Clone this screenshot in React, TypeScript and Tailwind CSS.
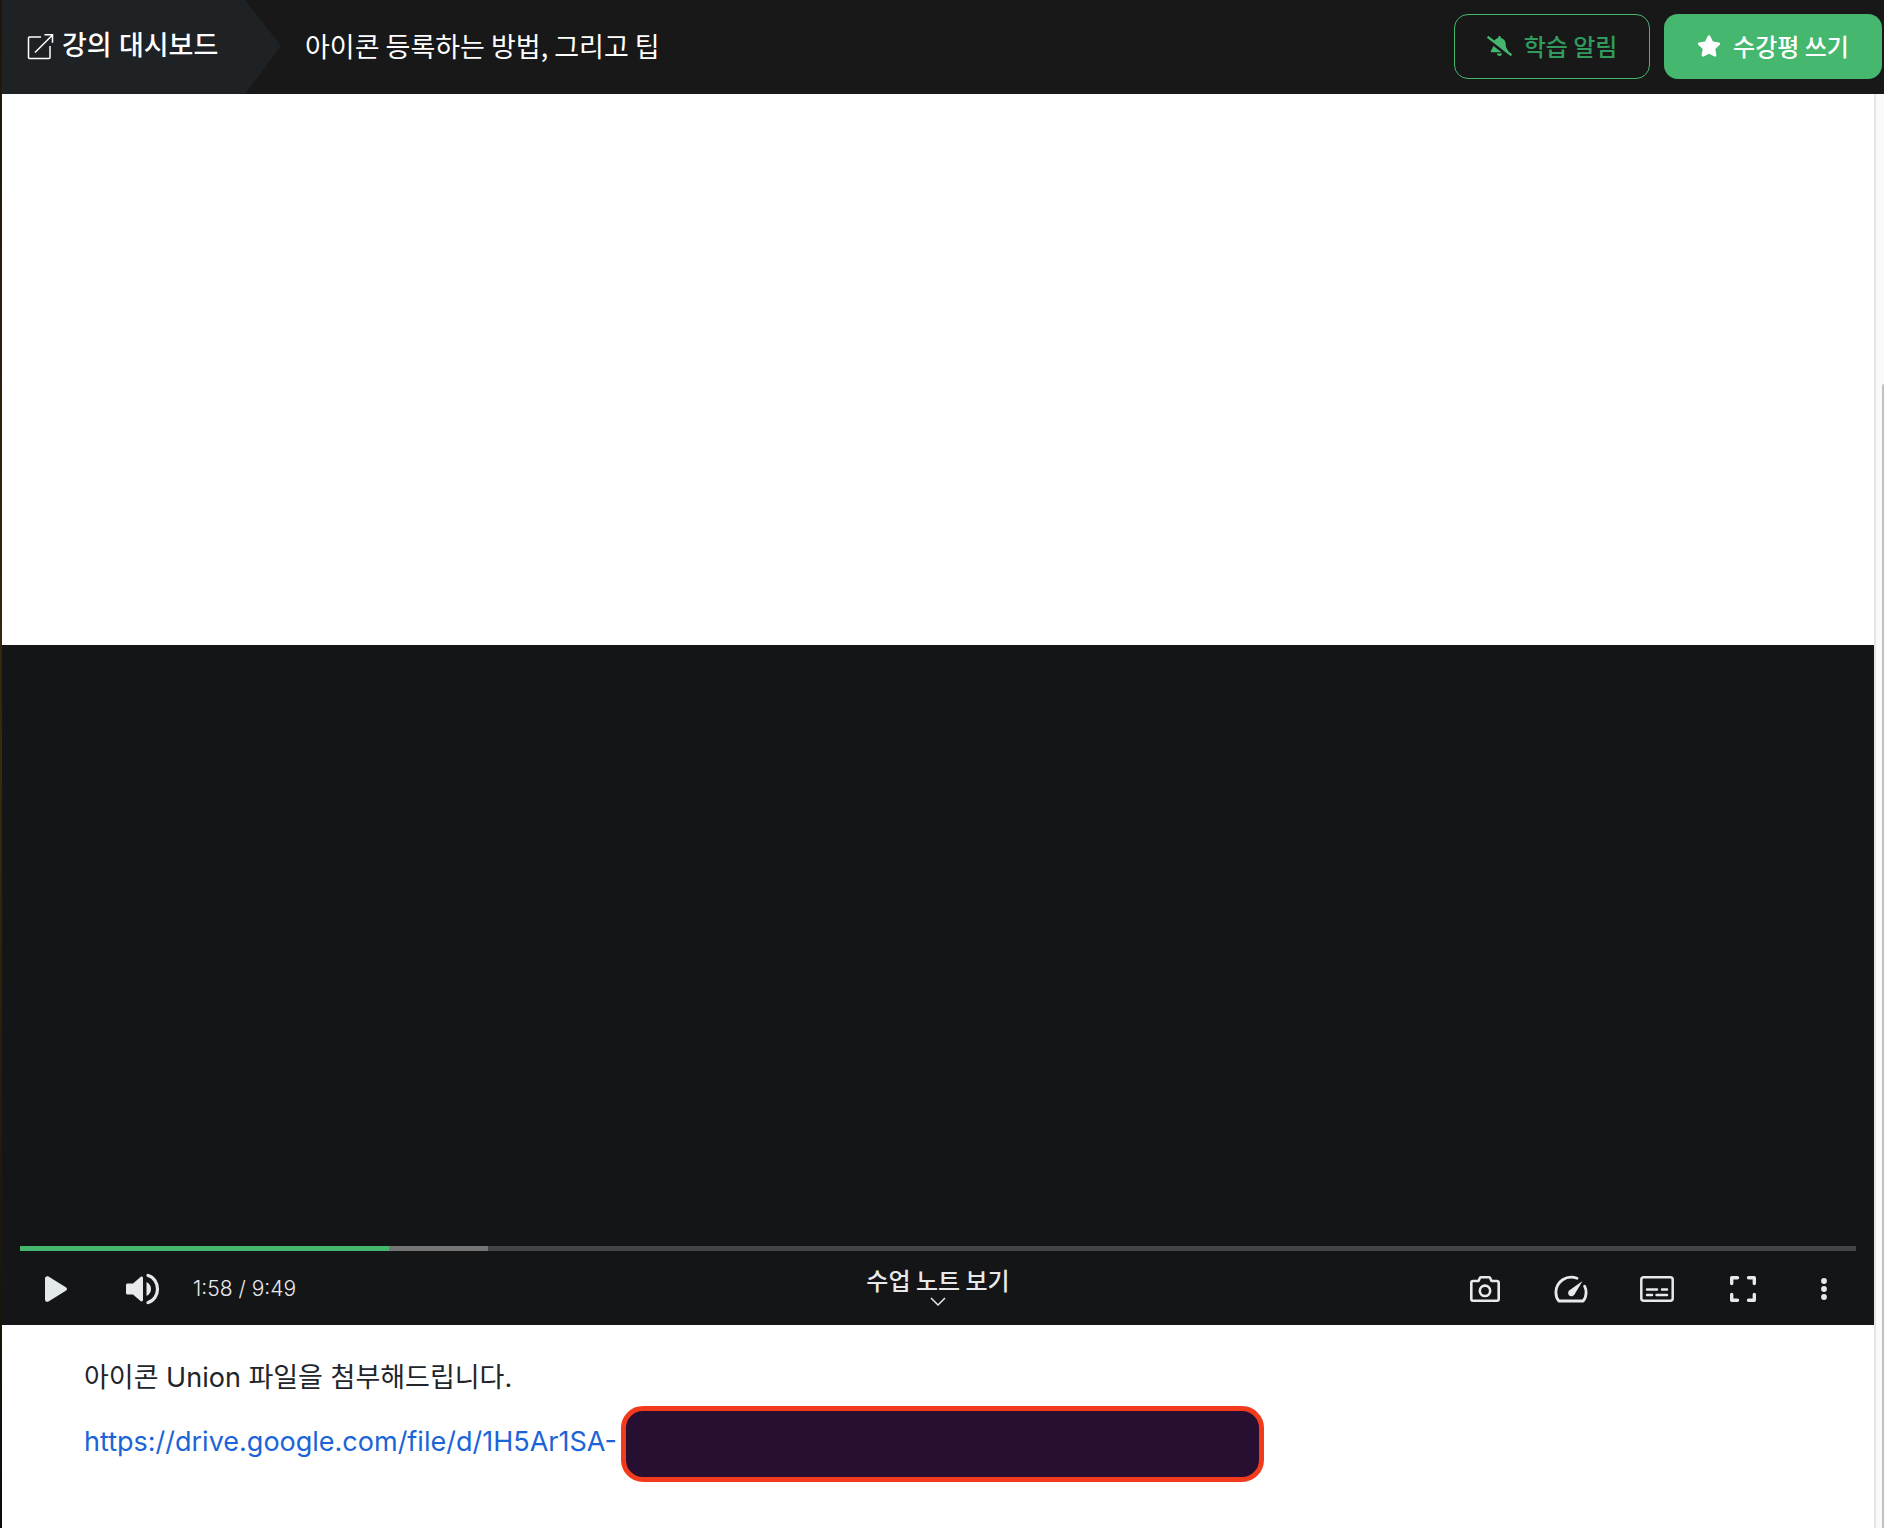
import React from 'react';
import { FaBellSlash, FaStar } from 'react-icons/fa';

const PLAYED = 118.4;
const BUFFERED = 150;
const DURATION = 589;

function formatTime(seconds: number) {
  return `${Math.floor(seconds / 60)}:${String(Math.floor(seconds % 60)).padStart(2, '0')}`;
}

function Header() {
  return (
    <header className="flex h-[94px] bg-[#181818] text-white">
      {/* Breadcrumb */}
      <a href="#" className="flex items-center bg-[#1f2225] pl-6 pb-0.5 w-[243px] text-[27px] font-medium whitespace-nowrap">
        <svg className="w-7 h-7 mr-2 shrink-0" viewBox="0 0 28 28" fill="none" stroke="currentColor" strokeWidth="1.5">
          <path d="M15 5H3.500a1 1 0 0 0-1 1v19.500a1 1 0 0 0 1 1h19.500a1 1 0 0 0 1-1V14" />
          <path d="M9 20.500 26 3.500M18.500 2.800h8v8" />
        </svg>
        강의 대시보드
      </a>
      <svg className="w-9 h-full shrink-0" viewBox="0 0 36 94" preserveAspectRatio="none" fill="#1f2225">
        <path d="M0 0 36 46 0 94z" />
      </svg>

      <div className="flex flex-1 items-center justify-between pl-6 pr-0.5 pb-0.5 font-['Noto_Sans_CJK_KR',sans-serif]">
        <h1 className="text-[27px] whitespace-nowrap">아이콘 등록하는 방법, 그리고 팁</h1>
        <div className="flex gap-3.5 text-2xl font-medium">
          <button className="flex h-[65px] w-[196px] items-center justify-center gap-3 rounded-[14px] border border-[#45b76e] text-[#319a5c]">
            <FaBellSlash className="w-[25px] h-5 text-[#45b76e]" />
            학습 알림
          </button>
          <button className="flex h-[65px] w-[218px] items-center justify-center gap-3 rounded-[14px] bg-[#45b76e]">
            <FaStar className="w-6 h-6" />
            수강평 쓰기
          </button>
        </div>
      </div>
    </header>
  );
}

function ControlButton({ label, children }: { label: string; children: React.ReactNode }) {
  return (
    <button aria-label={label} className="flex h-12 w-[54px] items-center justify-center">
      {children}
    </button>
  );
}

function Player() {
  return (
    <section className="flex min-h-[680px] flex-col justify-end bg-[#141517] text-[#e8e9ea]">
      {/* Progress */}
      <div className="relative mx-[18px] h-[5px] bg-[#434446]">
        <div className="absolute inset-y-0 left-0 bg-[#757575]" style={{ width: `${(BUFFERED / DURATION) * 100}%` }} />
        <div className="absolute inset-y-0 left-0 bg-[#45b76e]" style={{ width: `${(PLAYED / DURATION) * 100}%` }} />
      </div>

      <div className="grid h-[74px] grid-cols-[1fr_auto_1fr] items-center">
        <div className="flex items-center gap-[33px] pl-[27px] pt-0.5">
          <ControlButton label="재생">
            <svg className="w-[22px] h-[26px]" viewBox="0 0 22 26" fill="#e3e8eb">
              <path d="M0 2.500C0 .6 1.800-.4 3.500.6l17.300 10.700c1.600 1 1.600 2.400 0 3.400L3.500 25.400C1.800 26.400 0 25.400 0 23.500z" />
            </svg>
          </ControlButton>
          <ControlButton label="음량">
            <svg className="w-[34px] h-8" viewBox="0 0 34 32" fill="currentColor">
              <path d="M1.500 10.500H7l7.500-6.600c1-.9 2.500-.4 2.500 1v22.200c0 1.400-1.500 1.900-2.500 1L7 21.500H1.500C.7 21.500 0 20.800 0 20v-8c0-.8.7-1.500 1.500-1.500zM20.500 9c3 1.400 4.500 4 4.500 7s-1.500 5.600-4.500 7z" />
              <path d="M22 2.500c6 1.500 9.500 7.500 9.500 13.500S28 28 22 29.500" fill="none" stroke="currentColor" strokeWidth="3.200" strokeLinecap="round" />
            </svg>
          </ControlButton>
          <span className="-ml-2.5 text-[21px] font-light">
            {formatTime(PLAYED)} / {formatTime(DURATION)}
          </span>
        </div>

        <button className="flex flex-col items-center pb-1 text-2xl leading-8 font-medium whitespace-nowrap font-['Noto_Sans_CJK_KR',sans-serif]">
          수업 노트 보기
          <svg className="w-[18px] h-3" viewBox="0 0 18 12" fill="none" stroke="currentColor" strokeWidth="1.500">
            <path d="m2 2 7 7 7-7" />
          </svg>
        </button>

        <div className="flex items-center justify-end gap-8 pr-7 pt-0.5">
          <ControlButton label="화면 캡처">
            <svg className="w-[30px] h-[26px]" viewBox="0 0 30 26" fill="none" stroke="currentColor" strokeWidth="2.600">
              <path d="M3 5h5.500l1-2.300C9.800 1.800 10.300 1.300 11 1.300h8c.7 0 1.200.5 1.500 1.400l1 2.300H27a1.700 1.700 0 0 1 1.700 1.700V23a1.700 1.700 0 0 1-1.700 1.700H3A1.700 1.700 0 0 1 1.300 23V6.700A1.700 1.700 0 0 1 3 5z" strokeLinejoin="round" />
              <circle cx="15" cy="14.800" r="5.200" />
            </svg>
          </ControlButton>
          <ControlButton label="재생 속도">
            <svg className="w-[34px] h-7" viewBox="0 0 34 28" fill="none" stroke="currentColor" strokeWidth="2.800" strokeLinecap="round">
              <path d="M23 3.300A15.300 15.300 0 0 0 1.900 17.500c0 3.300 1 6.300 3 8.500h24.200c2-2.200 3-5.200 3-8.500 0-2.300-.6-4.500-1.500-6.300" strokeLinejoin="round" />
              <path d="m28.500 6-8 13.500c-1.300 2-3.800 2.300-5.300 1-1.500-1.400-1.400-3.700.3-5.200z" fill="currentColor" stroke="none" />
            </svg>
          </ControlButton>
          <ControlButton label="자막">
            <svg className="w-[34px] h-[26px]" viewBox="0 0 34 26" fill="none" stroke="currentColor" strokeWidth="2.500" strokeLinecap="round">
              <rect x="1.300" y="1.300" width="31.400" height="23.400" rx="2.500" />
              <path d="M7 13.500h10M22 13.500h5M7 19h5M16.500 19H27" />
            </svg>
          </ControlButton>
          <ControlButton label="전체 화면">
            <svg className="w-[26px] h-[26px]" viewBox="0 0 26 26" fill="none" stroke="currentColor" strokeWidth="3.400" strokeLinejoin="round" strokeLinecap="round">
              <path d="M1.700 7.500V1.700H7.500M18.500 1.700h5.800V7.500M24.300 18.500v5.800H18.500M7.500 24.300H1.700V18.500" />
            </svg>
          </ControlButton>
          <button aria-label="더보기" className="flex h-12 w-11 items-center justify-center">
            <svg className="w-1.5 h-[22px]" viewBox="0 0 6 22" fill="currentColor">
              <circle cx="3" cy="3" r="2.900" />
              <circle cx="3" cy="11" r="2.900" />
              <circle cx="3" cy="19" r="2.900" />
            </svg>
          </button>
        </div>
      </div>
    </section>
  );
}

function LessonNote() {
  return (
    <section className="px-[82px] pt-[33px] text-[27px] leading-10 text-[#212529]">
      <p>아이콘 Union 파일을 첨부해드립니다.</p>
      <p className="relative mt-6">
        <a href="#" className="text-[#1b64d8]">
          https://drive.google.com/file/d/1H5Ar1SA-
        </a>
        {/* Hidden part of the link */}
        <span className="absolute -top-4 left-[537px] h-[76px] w-[643px] rounded-[22px] border-5 border-[#f23a1d] bg-[#260f31]" />
      </p>
    </section>
  );
}

export default function App() {
  return (
    <div className="flex min-h-screen bg-white font-['Inter','Noto_Sans_CJK_KR',sans-serif]">
      <div className="w-0.5 shrink-0 bg-linear-to-b from-[#1c1608] via-[#3a2a0c] to-[#0c0d08]" />
      <div className="flex min-w-0 flex-1 flex-col">
        <Header />
        <div className="flex flex-1">
          <main className="min-w-0 flex-1">
            <div className="min-h-[551px]" />
            <Player />
            <LessonNote />
          </main>
          {/* Scrollbar */}
          <div className="flex w-2.5 justify-end border-l-2 border-[#e5e5e5] bg-[#fafafa] pt-[290px]">
            <div className="w-0.5 rounded-tl-full bg-[#c1c1c1]" />
          </div>
        </div>
      </div>
    </div>
  );
}
